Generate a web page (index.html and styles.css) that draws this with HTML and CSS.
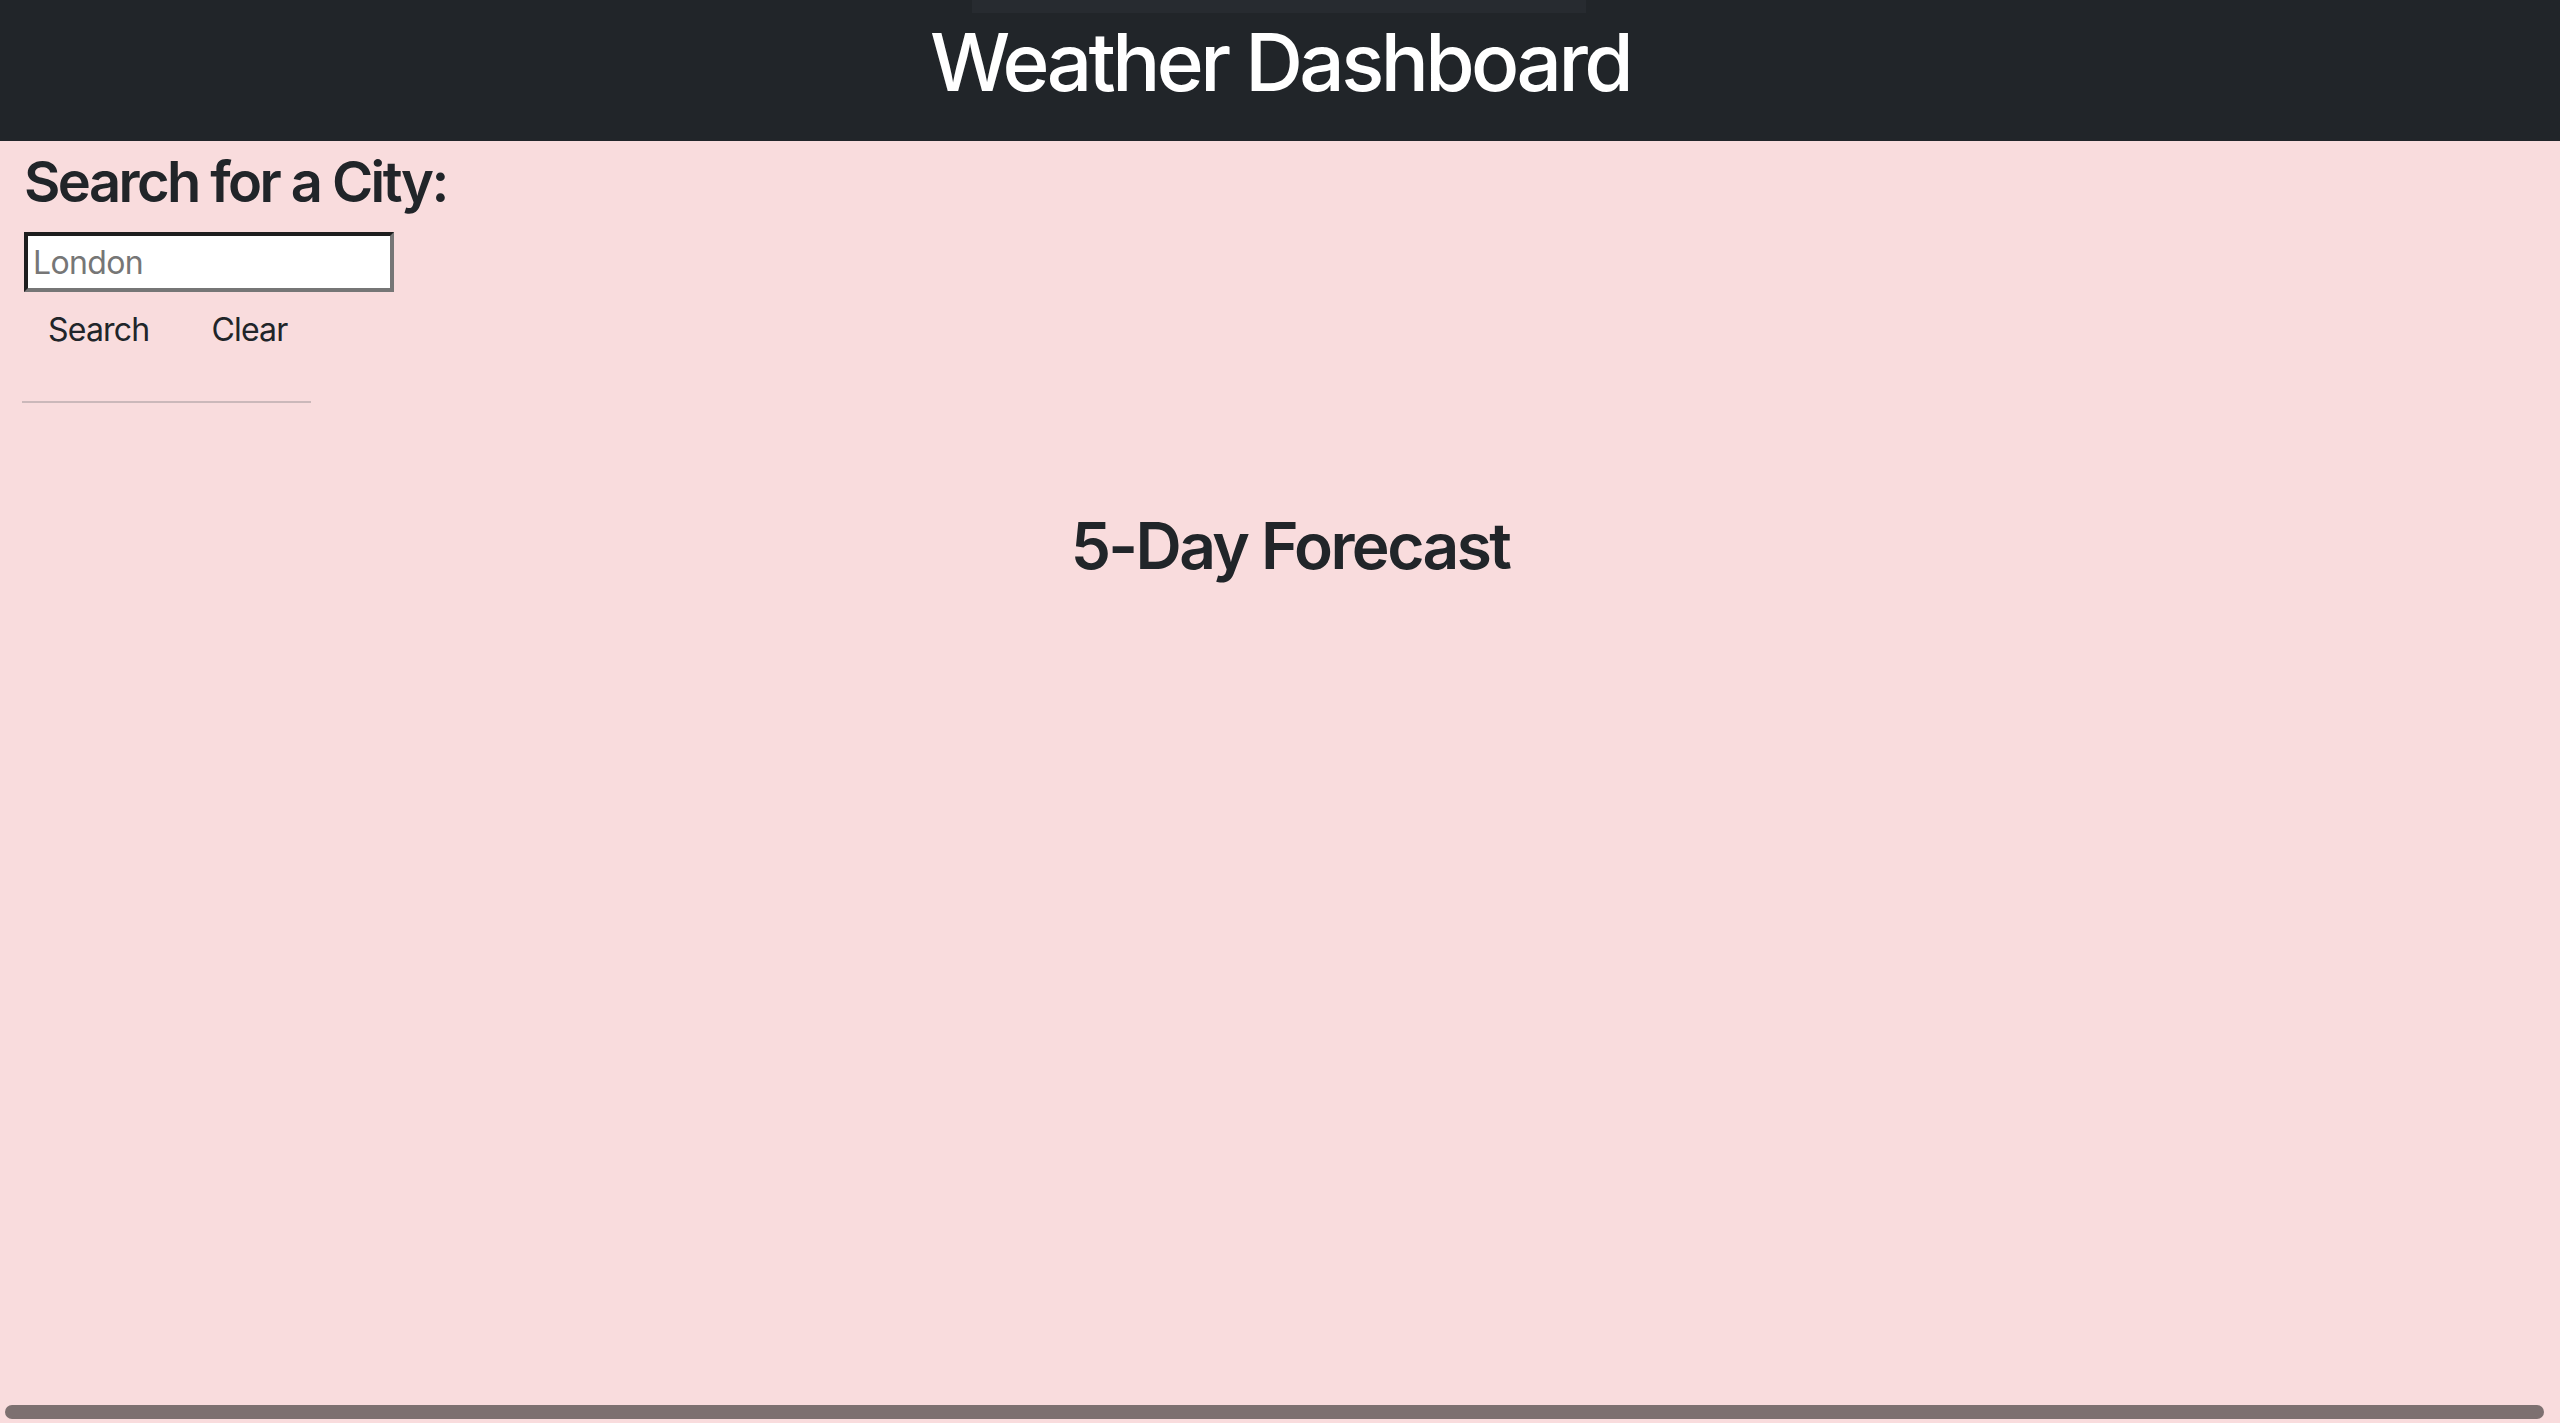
FILE: index.html
```html
<!DOCTYPE html>
<html lang="en">
<head>
<meta charset="utf-8">
<title>Weather Dashboard</title>
<link rel="stylesheet" href="styles.css">
</head>
<body>
<header class="topbar">
  <div class="topbar-strip"></div>
  <h1 class="title">Weather Dashboard</h1>
</header>
<main class="main">
  <section class="search">
    <h3 class="search-title">Search for a City:</h3>
    <input class="search-input" type="text" placeholder="London">
    <div class="search-buttons">
      <button class="btn">Search</button>
      <button class="btn">Clear</button>
    </div>
    <hr class="divider">
  </section>
  <section class="forecast">
    <h2 class="forecast-title">5-Day Forecast</h2>
  </section>
</main>
<div class="hscroll"></div>
</body>
</html>
```
FILE: styles.css
```css
html, body {
  margin: 0;
  padding: 0;
}
body {
  background: #f9dcdd;
  font-family: Inter, "Noto Sans", sans-serif;
  color: #212529;
  height: 1423px;
  overflow: hidden;
}
.topbar {
  background: #212529;
  height: 141px;
  display: flex;
  flex-direction: column;
  align-items: center;
}
.topbar-strip {
  width: 614px;
  height: 13px;
  background: #272b30;
  margin-left: -2px;
}
.title {
  margin: 1px 0 0 0;
  color: #ffffff;
  font-size: 80px;
  font-weight: 500;
  line-height: 1.2;
  letter-spacing: -0.045em;
}
.main {
  display: flex;
  flex-direction: column;
}
.search {
  display: flex;
  flex-direction: column;
  align-items: flex-start;
  padding-left: 24px;
  width: 290px;
}
.search-title {
  margin: 8px 0 16px 0;
  font-size: 56px;
  font-weight: 600;
  line-height: 1.2;
  letter-spacing: -0.046em;
  white-space: nowrap;
}
.search-input {
  box-sizing: border-box;
  width: 370px;
  height: 60px;
  margin: 0;
  padding: 0 5px;
  border-style: solid;
  border-width: 4px;
  border-color: #1e1e1e #767676 #767676 #1e1e1e;
  background: #fff;
  font-family: Inter, "Noto Sans", sans-serif;
  font-size: 32px;
  letter-spacing: -0.02em;
  color: #212529;
  outline: none;
}
.search-input::placeholder {
  color: #767676;
}
.search-buttons {
  display: flex;
  gap: 14px;
  margin-top: 2px;
}
.btn {
  background: transparent;
  border: 0;
  padding: 12px 24px;
  font-family: Inter, "Noto Sans", sans-serif;
  font-size: 32px;
  line-height: 1.5;
  letter-spacing: -0.025em;
  color: #212529;
}
.divider {
  box-sizing: border-box;
  width: 289px;
  margin: 35px 0 0 -2px;
  border: 0;
  border-top: 2px solid #cbb8ba;
}
.forecast {
  display: flex;
  justify-content: center;
  padding-left: 20px;
  margin-top: 105px;
}
.forecast-title {
  margin: 0;
  font-size: 64px;
  font-weight: 600;
  line-height: 1.2;
  letter-spacing: -0.04em;
}
.hscroll {
  position: fixed;
  left: 5px;
  right: 16px;
  bottom: 4px;
  height: 14px;
  border-radius: 7px;
  background: #7d7070;
}
```
